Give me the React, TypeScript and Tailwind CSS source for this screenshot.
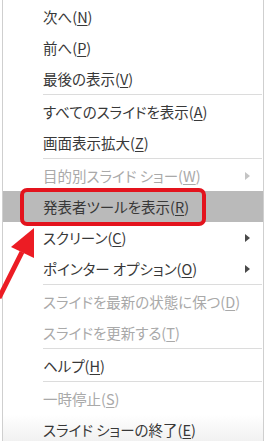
type Item = {
  label: string;
  key: string;
  disabled?: boolean;
  sub?: boolean;
  active?: boolean;
};

const groups: Item[][] = [
  [
    { label: "次へ", key: "N" },
    { label: "前へ", key: "P" },
    { label: "最後の表示", key: "V" },
  ],
  [
    { label: "すべてのスライドを表示", key: "A" },
    { label: "画面表示拡大", key: "Z" },
  ],
  [
    { label: "目的別スライド ショー", key: "W", disabled: true, sub: true },
    { label: "発表者ツールを表示", key: "R", active: true },
    { label: "スクリーン", key: "C", sub: true },
    { label: "ポインター オプション", key: "O", sub: true },
  ],
  [
    { label: "スライドを最新の状態に保つ", key: "D", disabled: true },
    { label: "スライドを更新する", key: "T", disabled: true },
  ],
  [{ label: "ヘルプ", key: "H" }],
  [
    { label: "一時停止", key: "S", disabled: true },
    { label: "スライド ショーの終了", key: "E" },
  ],
];

function Row({ item }: { item: Item }) {
  return (
    <div
      className={`relative flex h-[31px] items-center pl-[40px] pr-[13px] ${
        item.active ? "bg-[#bababa]" : ""
      } ${item.disabled ? "text-[#a9a9a9]" : "text-[#383838]"}`}
    >
      <span className="flex-1 whitespace-nowrap">
        {item.label}(<span className="underline underline-offset-2">{item.key}</span>)
      </span>
      {item.sub && (
        <svg width="5" height="8" viewBox="0 0 5 8">
          <path d="M0 0 L5 4 L0 8 Z" fill={item.disabled ? "#c4c4c4" : "#4a4a4a"} />
        </svg>
      )}
      {item.active && (
        <div className="absolute left-[17px] top-[-3px] h-[38px] w-[186px] rounded-[7px] border-[4px] border-[#e3131d]" />
      )}
    </div>
  );
}

export default function App() {
  return (
    <div className="relative h-[441px] w-[265px] overflow-hidden bg-white font-['Noto_Sans_CJK_JP',sans-serif] text-[14.5px] [font-feature-settings:'palt']">
      <div className="ml-[2px] mr-[1px] h-full border-x border-[#cfcfcf] bg-gradient-to-b from-white from-[94%] to-[#f1f1f1] pt-[1px]">
        {groups.map((g, i) => (
          <div key={i}>
            {i > 0 && <div className="ml-[40px] mr-[1px] mb-px h-px bg-[#dcdcdc]" />}
            {g.map((item) => (
              <Row key={item.key} item={item} />
            ))}
          </div>
        ))}
      </div>
      <svg className="absolute left-0 top-0" width="265" height="441">
        <line x1="22" y1="252" x2="-1" y2="298" stroke="#ec1c24" strokeWidth="5" />
        <polygon points="34,228 11,247 34,258" fill="#ec1c24" />
      </svg>
    </div>
  );
}
